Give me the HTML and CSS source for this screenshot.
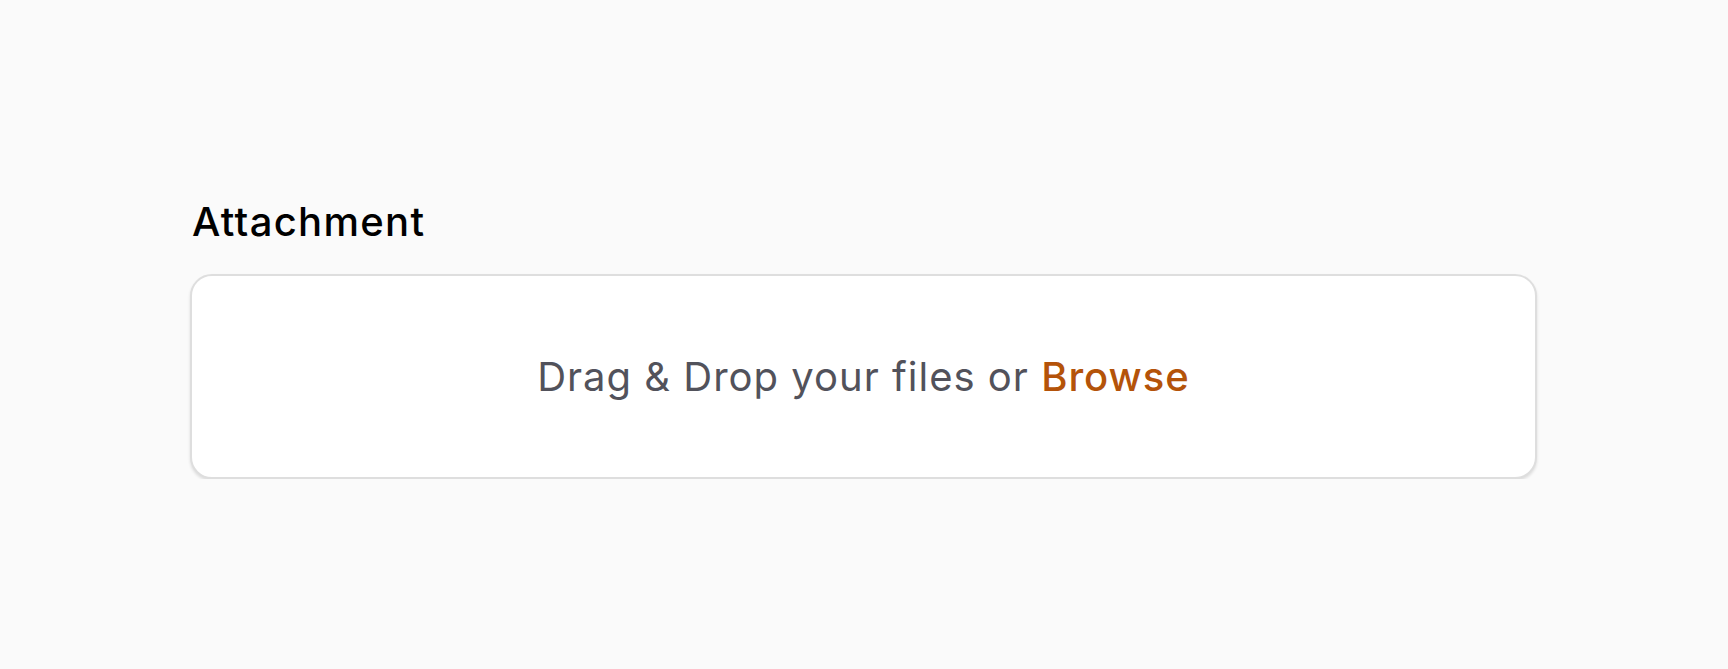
FILE: index.html
```html
<!DOCTYPE html>
<html lang="en">
<head>
    <meta charset="UTF-8">
    <meta name="viewport" content="width=device-width, initial-scale=1.0">
    <title>Attachment</title>
    <link rel="stylesheet" href="styles.css">
</head>
<body>
    <div class="container">
        <label class="field-label" for="fileInput">Attachment</label>
        <div class="dropzone">
            <p class="dropzone-text">Drag &amp; Drop your files or <span class="browse">Browse</span></p>
            <input type="file" id="fileInput" class="file-input" multiple>
        </div>
    </div>
</body>
</html>
```

FILE: styles.css
```css
body {
    font-family: Inter, "Noto Sans", Arial, sans-serif;
    background-color: #fafafa;
    margin: 0;
    padding: 0;
}

.container {
    padding: 192px 191px 0 190px;
}

.field-label {
    display: block;
    padding-left: 2px;
    font-size: 40px;
    font-weight: 500;
    line-height: 60px;
    letter-spacing: 1.3px;
    color: #000;
    margin-bottom: 22px;
}

.dropzone {
    height: 201px;
    display: flex;
    align-items: center;
    justify-content: center;
    background-color: #ffffff;
    border: 2px solid #dedede;
    border-radius: 22px;
    box-shadow: 0 2px 3px rgba(0, 0, 0, 0.12);
}

.dropzone-text {
    margin: 0;
    font-size: 40px;
    letter-spacing: 1px;
    color: #52525b;
}

.browse {
    color: #b45309;
    font-weight: 500;
    cursor: pointer;
}

.file-input {
    display: none;
}
```
